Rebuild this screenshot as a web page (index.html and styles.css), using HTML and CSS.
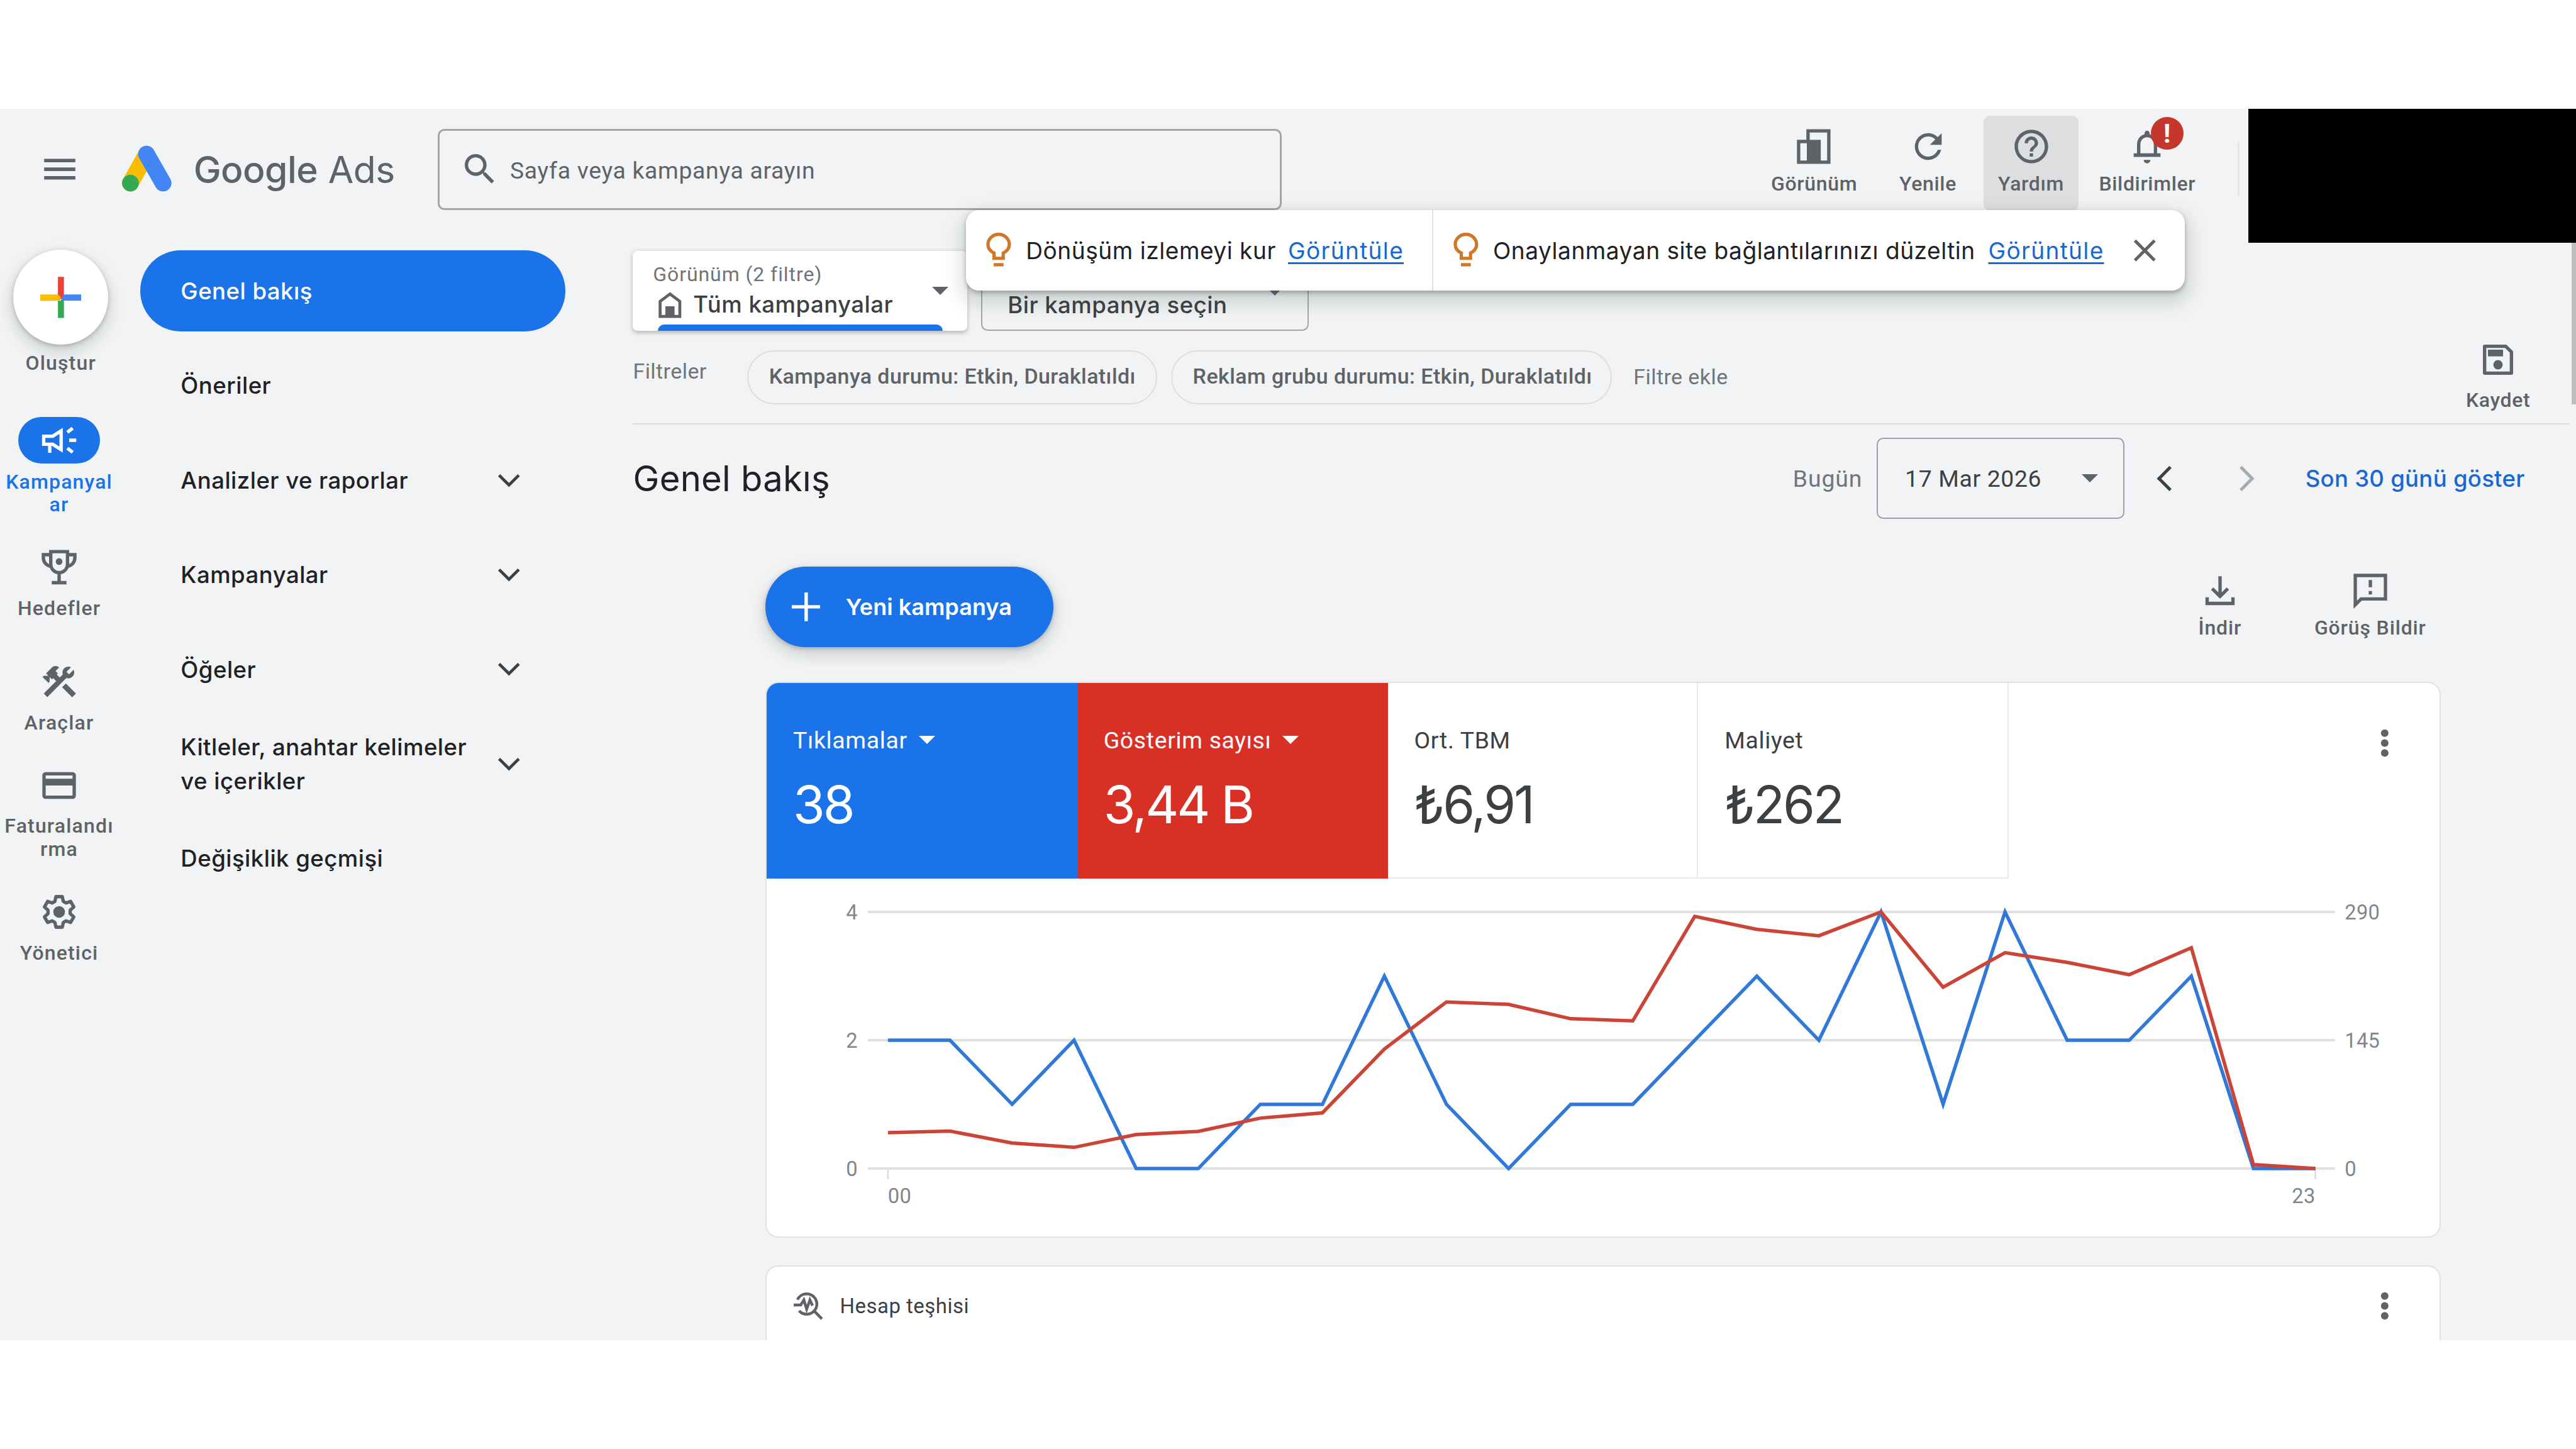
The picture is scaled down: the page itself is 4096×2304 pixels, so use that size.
FILE: index.html
```html
<!DOCTYPE html>
<html lang="tr">
<head>
  <meta charset="UTF-8">
  <title>Genel bakış - Google Ads</title>
  <link rel="stylesheet" href="styles.css">
</head>
<body>
  <div class="app">
    <header class="topbar">
      <svg class="icon menu" viewBox="0 0 24 24"><path d="M2.7 5.8h18.6v2.1H2.7zM2.7 11h18.6v2.1H2.7zM2.7 16.1h18.6v2.1H2.7z"/></svg>
      <svg class="logo" viewBox="0 0 31 29">
        <path d="M15.3 5.4 5.5 23" stroke="#fbbc04"/>
        <path d="M15.3 5.4 25.4 23" stroke="#4285f4"/>
        <circle cx="5.5" cy="23" r="5.1" fill="#34a853"/>
      </svg>
      <div class="brand"><span class="brand-google">Google</span> <span class="brand-ads">Ads</span></div>
      <div class="search">
        <svg class="icon" viewBox="0 0 24 24"><path d="M15.5 14h-.79l-.28-.27C15.41 12.59 16 11.11 16 9.5 16 5.91 13.09 3 9.5 3S3 5.91 3 9.5 5.91 16 9.5 16c1.61 0 3.09-.59 4.23-1.57l.27.28v.79l5 4.99L20.49 19l-4.99-5zm-6 0C7.01 14 5 11.99 5 9.5S7.01 5 9.5 5 14 7.01 14 9.5 11.99 14 9.5 14z"/></svg>
        <span>Sayfa veya kampanya arayın</span>
      </div>
      <div class="tools">
        <div class="tool">
          <svg class="icon" viewBox="0 0 24 24"><path class="line" d="M8.2 2.7h12.4v18.6H2.6V9h5.6z"/><path d="M7.5 8h8.3v14H7.5z"/></svg>
          <span>Görünüm</span>
        </div>
        <div class="tool tool-refresh">
          <svg class="icon" viewBox="0 0 24 24"><path d="M17.65 6.35C16.2 4.9 14.21 4 12 4c-4.42 0-7.99 3.58-7.99 8s3.57 8 7.99 8c3.73 0 6.84-2.55 7.73-6h-2.08c-.82 2.33-3.04 4-5.65 4-3.31 0-6-2.69-6-6s2.69-6 6-6c1.66 0 3.14.69 4.22 1.78L13 11h7V4l-2.35 2.35z"/></svg>
          <span>Yenile</span>
        </div>
        <div class="tool tool-active">
          <svg class="icon" viewBox="0 0 24 24"><path d="M11 18h2v-2h-2v2zm1-16C6.48 2 2 6.48 2 12s4.48 10 10 10 10-4.48 10-10S17.52 2 12 2zm0 18c-4.41 0-8-3.59-8-8s3.59-8 8-8 8 3.59 8 8-3.59 8-8 8zm0-14c-2.21 0-4 1.79-4 4h2c0-1.1.9-2 2-2s2 .9 2 2c0 2-3 1.75-3 5h2c0-2.25 3-2.5 3-5 0-2.21-1.79-4-4-4z"/></svg>
          <span>Yardım</span>
        </div>
        <div class="tool tool-bell">
          <svg class="icon" viewBox="0 0 24 24"><path d="M12 22c1.1 0 2-.9 2-2h-4c0 1.1.9 2 2 2zm6-6v-5c0-3.07-1.63-5.64-4.5-6.32V4c0-.83-.67-1.5-1.5-1.5s-1.5.67-1.5 1.5v.68C7.64 5.36 6 7.92 6 11v5H4v2.2h16V16h-2zm-2 0H8v-5c0-2.48 1.51-4.5 4-4.5s4 2.02 4 4.5v5z"/></svg>
          <span>Bildirimler</span>
          <b class="badge">!</b>
        </div>
      </div>
      <div class="topbar-line"></div>
    </header>

    <div class="body">
      <aside class="rail">
        <div class="fab">
          <svg viewBox="0 0 26 26"><path d="M11.2 0h3.8v13l-3.8 2z" fill="#ea4335"/><path d="M0 11.1h11.2l2 2-2 2H0z" fill="#fbbc04"/><path d="M15 11.1h11V15H13z" fill="#4285f4"/><path d="M11.2 15h3.8v11h-3.8z" fill="#34a853"/></svg>
        </div>
        <span class="rail-label rail-create">Oluştur</span>
        <div class="rail-item rail-active">
          <div class="pill">
            <svg class="icon" viewBox="0 0 24 24"><path class="line" d="M2.8 9.6h5.4l5-3.2v11.200l-5-3.200H2.800zM6.400 14.500v5M16.900 7.300l3.200-2.500M18 12h4.200M16.900 16.700l3.200 2.500"/></svg>
          </div>
          <span class="rail-label">Kampanyal<br>ar</span>
        </div>
        <div class="rail-item">
          <svg class="icon" viewBox="0 0 24 24"><path class="line" d="M7 2.700h10v7.500a5 5 0 0 1-10 0zM7 4.500H2.600v1.800c0 2.800 2 4.900 4.800 5.200M17 4.500h4.400v1.800c0 2.800-2 4.900-4.800 5.200M12 15v6M7.600 21.200h8.800"/><circle cx="12" cy="8.600" r="2"/></svg>
          <span class="rail-label">Hedefler</span>
        </div>
        <div class="rail-item rail-gap">
          <svg class="icon" viewBox="0 0 24 24"><path d="m13.780 15.300 2.250-2.250 6 6-2.250 2.250zM17.500 10c1.930 0 3.500-1.570 3.500-3.500 0-.58-.16-1.120-.41-1.600l-2.700 2.700-1.490-1.490 2.700-2.700c-.48-.25-1.020-.41-1.600-.41C15.570 3 14 4.570 14 6.500c0 .41.08.8.21 1.160l-1.850 1.850-1.780-1.780.71-.71-1.410-1.410L12 3.490c-1.170-1.170-3.070-1.170-4.240 0L4.220 7.030l1.410 1.410H2.810l-.71.71 3.540 3.540.71-.71V9.150l1.410 1.410.71-.71 1.780 1.780-7.410 7.410 2.120 2.120L16.340 9.790c.36.13.75.21 1.160.21z"/></svg>
          <span class="rail-label">Araçlar</span>
        </div>
        <div class="rail-item">
          <svg class="icon" viewBox="0 0 24 24"><path d="M20 4H4c-1.110 0-1.990.89-1.990 2L2 18c0 1.110.89 2 2 2h16c1.110 0 2-.89 2-2V6c0-1.110-.89-2-2-2zm0 14H4v-6h16v6zm0-10H4V6h16v2z"/></svg>
          <span class="rail-label">Faturalandı<br>rma</span>
        </div>
        <div class="rail-item">
          <svg class="icon" viewBox="0 0 24 24"><path class="line" stroke-linejoin="round" d="M10.100 2.900h3.800l.6 2.800 1.600.95 2.750-.9 1.900 3.300-2.150 1.950v2l2.150 1.950-1.900 3.300-2.750-.9-1.600.95-.6 2.800h-3.800l-.6-2.800-1.600-.95-2.750.9-1.900-3.300L5.400 13v-2L3.250 9.050l1.900-3.300 2.750.9 1.600-.95z"/><circle cx="12" cy="12" r="3.500"/></svg>
          <span class="rail-label">Yönetici</span>
        </div>
      </aside>

      <nav class="nav">
        <a class="nav-item nav-active">Genel bakış</a>
        <a class="nav-item">Öneriler</a>
        <a class="nav-item">Analizler ve raporlar <svg class="chev" viewBox="0 0 14 9"><path d="m1 1 6 6 6-6"/></svg></a>
        <a class="nav-item">Kampanyalar <svg class="chev" viewBox="0 0 14 9"><path d="m1 1 6 6 6-6"/></svg></a>
        <a class="nav-item">Öğeler <svg class="chev" viewBox="0 0 14 9"><path d="m1 1 6 6 6-6"/></svg></a>
        <a class="nav-item"><span>Kitleler, anahtar kelimeler<br>ve içerikler</span> <svg class="chev" viewBox="0 0 14 9"><path d="m1 1 6 6 6-6"/></svg></a>
        <a class="nav-item">Değişiklik geçmişi</a>
      </nav>

      <main class="main">
        <div class="selectors">
          <div class="select select-view">
            <div class="select-text">
              <small>Görünüm (2 filtre)</small>
              <div class="select-value">
                <svg class="home" viewBox="0 0 14 16"><path class="line" d="M1 15V5.800L7 1.300l6 4.500V15z"/><path d="M4.200 8.800h5.600V15H4.200z"/></svg>
                <span>Tüm kampanyalar</span>
              </div>
            </div>
            <i class="caret"></i>
          </div>
          <div class="select select-campaign">
            <span>Bir kampanya seçin</span>
            <i class="caret"></i>
          </div>
        </div>

        <div class="filters">
          <span class="filters-label">Filtreler</span>
          <span class="chip chip-status">Kampanya durumu: Etkin, Duraklatıldı</span>
          <span class="chip chip-group">Reklam grubu durumu: Etkin, Duraklatıldı</span>
          <span class="filters-add">Filtre ekle</span>
          <div class="tool save">
            <svg class="icon" viewBox="0 0 24 24"><path class="line" d="M4 4h12.600L20 7.400V20H4z" stroke-linejoin="round"/><path d="M6 6h9v4H6z"/><circle cx="12" cy="15" r="2.800"/></svg>
            <span>Kaydet</span>
          </div>
        </div>

        <div class="title-row">
          <h1>Genel bakış</h1>
          <span class="today">Bugün</span>
          <div class="date"><span>17 Mar 2026</span><i class="caret"></i></div>
          <svg class="arrow" viewBox="0 0 10 16"><path d="M8.500 1 1.500 8l7 7"/></svg>
          <svg class="arrow arrow-off" viewBox="0 0 10 16"><path d="m1.500 1 7 7-7 7"/></svg>
          <a class="last30">Son 30 günü göster</a>
        </div>

        <div class="actions">
          <a class="new-campaign">
            <svg viewBox="0 0 17 17"><path d="M8.500 0v17M0 8.500h17" stroke="#fff" stroke-width="2"/></svg>
            <span>Yeni kampanya</span>
          </a>
          <div class="tool download">
            <svg class="icon" viewBox="0 0 24 24"><path class="line" d="M12 3.500v11.700M7.300 10.800l4.700 4.700 4.700-4.700M4.300 16v3.700h15.400V16"/></svg>
            <span>İndir</span>
          </div>
          <div class="tool feedback">
            <svg class="icon" viewBox="0 0 24 24"><path class="line" d="M3 3h18v14H6.500L3 20.500z"/><path d="M11 5.700h2V10h-2zM11 12.300h2v2h-2z"/></svg>
            <span>Görüş Bildir</span>
          </div>
        </div>

        <section class="card chart-card">
          <div class="metrics">
            <div class="metric metric-blue"><span>Tıklamalar <i class="caret"></i></span><b>38</b></div>
            <div class="metric metric-red"><span>Gösterim sayısı <i class="caret"></i></span><b>3,44 B</b></div>
            <div class="metric"><span>Ort. TBM</span><b>₺6,91</b></div>
            <div class="metric"><span>Maliyet</span><b>₺262</b></div>
            <svg class="kebab" viewBox="0 0 6 18"><circle cx="3" cy="3" r="2.300"/><circle cx="3" cy="9" r="2.300"/><circle cx="3" cy="15" r="2.300"/></svg>
          </div>
          <svg class="chart" viewBox="0 0 1018.800 218.200">
            <path class="grid" d="M62 20.300h893M62 98.400h893M62 176.500h893"/>
            <path class="tick" d="M74.200 177v6M943.100 177v6"/>
            <g class="axis">
              <text x="55.800" y="24.900" text-anchor="end">4</text>
              <text x="55.800" y="103" text-anchor="end">2</text>
              <text x="55.800" y="181" text-anchor="end">0</text>
              <text x="961" y="24.900">290</text>
              <text x="961" y="103">145</text>
              <text x="961" y="181">0</text>
              <text x="74.200" y="197.500">00</text>
              <text x="943.100" y="197.500" text-anchor="end">23</text>
            </g>
          </svg>
        </section>

        <section class="card diag-card">
          <svg class="diag-icon" viewBox="0 0 18 18"><path class="line" d="M2.300 5.200A6.200 6.200 0 1 1 3.300 12M12.700 12.300l4.500 4.600M0 8.400h4.300l1.900-3 1.700 5.600 2-5.600 1.600 3.400"/></svg>
          <span>Hesap teşhisi</span>
          <svg class="kebab" viewBox="0 0 6 18"><circle cx="3" cy="3" r="2.300"/><circle cx="3" cy="9" r="2.300"/><circle cx="3" cy="15" r="2.300"/></svg>
        </section>
      </main>
    </div>

    <!-- bildirim çubuğu -->
    <div class="toast">
      <div class="toast-part">
        <svg class="bulb" viewBox="0 0 16 22"><path d="M5.200 15.600v-3.200C3 11.300 1.500 9.500 1.500 7.200a6.500 6.200 0 0 1 13 0c0 2.300-1.500 4.100-3.700 5.200v3.200z"/><path d="M5 19.500h6"/></svg>
        <span class="toast-a">Dönüşüm izlemeyi kur</span>
        <a>Görüntüle</a>
      </div>
      <div class="toast-part toast-second">
        <svg class="bulb" viewBox="0 0 16 22"><path d="M5.200 15.600v-3.200C3 11.300 1.500 9.500 1.500 7.200a6.500 6.200 0 0 1 13 0c0 2.300-1.500 4.100-3.700 5.200v3.200z"/><path d="M5 19.500h6"/></svg>
        <span class="toast-b">Onaylanmayan site bağlantılarınızı düzeltin</span>
        <a>Görüntüle</a>
        <svg class="close" viewBox="0 0 14 14"><path d="m1 1 12 12M13 1 1 13"/></svg>
      </div>
    </div>

    <div class="account-mask"></div>
    <div class="scroll-thumb"></div>
  </div>

  <script src="chart.js"></script>
</body>
</html>
```
FILE: styles.css
```css
/* 1rem = pencere genişliğinin 156,8'de biri */
html { font-size: calc(100vw / 156.8); }
body { margin: 0; background: #fff; overflow: hidden; font-family: Roboto, "Liberation Sans", sans-serif; color: #5f6368; }
svg { display: block; flex: none; fill: #5f6368; }
h1 { margin: 0; font-weight: 400; }

.app { position: relative; margin-top: 6.63rem; height: 74.94rem; background: #f1f3f4; overflow: hidden; }
.icon { width: 2.45rem; height: 2.45rem; }
.line { fill: none; stroke: #5f6368; stroke-width: 2; }
.caret { display: inline-block; flex: none; border: .51rem solid transparent; border-top-color: #5f6368; border-bottom: 0; }

/* üst çubuk */
.topbar { display: flex; align-items: center; height: 7.36rem; padding-left: 2.4rem; }
.logo { width: 3.1rem; height: 2.9rem; margin-left: 2.53rem; fill: none; stroke-width: 10.2; stroke-linecap: round; }
.logo circle { stroke: none; }
.brand { width: 12.4rem; margin-left: 1.3rem; font-family: Inter, sans-serif; font-size: 2.25rem; white-space: nowrap; }
.brand-google { font-weight: 500; letter-spacing: -.02rem; }
.brand-ads { letter-spacing: -.02rem; }
.search { box-sizing: border-box; display: flex; align-items: center; width: 51.4rem; height: 4.94rem; margin-left: 2.45rem; padding-left: 1.25rem; border: .13rem solid #a3a6a9; border-radius: .4rem; font-size: 1.43rem; }
.search span { margin: .1rem 0 0 .6rem; letter-spacing: .026rem; }
.tools { display: flex; align-self: flex-start; margin-top: .4rem; margin-left: 28.3rem; }
.tool { position: relative; display: flex; flex-direction: column; align-items: center; font-size: 1.225rem; font-weight: 500; line-height: 1.4rem; letter-spacing: .025rem; white-space: nowrap; }
.tools .tool { box-sizing: border-box; width: 8.2rem; height: 5.8rem; padding-top: .66rem; }
.tool span { margin-top: .35rem; }
.tools .tool-refresh { width: 5.65rem; margin-right: .58rem; }
.tools .tool-active { width: 5.75rem; background: #dcdee0; border-radius: .4rem; }
.tools .tool-bell { width: 8.4rem; }
.badge { position: absolute; top: .1rem; left: 4.4rem; width: 2rem; height: 2rem; border-radius: 50%; background: #c5372c; color: #fff; font-size: 1.6rem; line-height: 2.05rem; text-align: center; letter-spacing: 0; }
.topbar-line { width: .1rem; height: 3.3rem; margin-left: 1.3rem; background: #e4e6e8; }

.body { display: flex; }

/* sol şerit */
.rail { display: flex; flex-direction: column; align-items: center; width: 7.2rem; padding-top: 1.2rem; }
.fab { display: flex; align-items: center; justify-content: center; width: 5.8rem; height: 5.8rem; margin-left: .2rem; border-radius: 50%; background: #fff; box-shadow: 0 .1rem .3rem rgba(60,64,67,.3), 0 .4rem .8rem .2rem rgba(60,64,67,.15); }
.fab svg { width: 2.5rem; height: 2.6rem; }
.rail-label { font-size: 1.225rem; font-weight: 500; line-height: 1.4rem; letter-spacing: .045rem; text-align: center; }
.rail-create { margin: .4rem 0 0 .2rem; }
.rail-item { display: flex; flex-direction: column; align-items: center; gap: .56rem; margin-top: 1.9rem; }
.rail-active { margin-top: 2.58rem; gap: .4rem; color: #1a73e8; }
.rail-active .line { stroke: #fff; }
.rail-gap { margin-top: 2.54rem; }
.pill { display: flex; align-items: center; justify-content: center; width: 4.98rem; height: 2.85rem; border-radius: 1.43rem; background: #1a73e8; }

/* gezinme menüsü */
.nav { display: flex; flex-direction: column; gap: .84rem; width: 25.9rem; margin-left: 1.33rem; padding-top: 1.26rem; }
.nav-item { box-sizing: border-box; display: flex; align-items: center; justify-content: space-between; height: 4.92rem; padding: .06rem 2.75rem 0 2.47rem; border-radius: 2.46rem; color: #202124; font-family: Inter, sans-serif; font-size: 1.4rem; font-weight: 500; line-height: 2.04rem; letter-spacing: .018rem; white-space: nowrap; }
.nav-active { background: #1a73e8; color: #fff; }
.chev { width: 1.4rem; height: .9rem; fill: none; stroke: #3c4043; stroke-width: 1.8; }

.main { flex: 1; margin-left: 4.1rem; padding-top: 1.28rem; }

/* görünüm seçimi */
.selectors { display: flex; gap: .85rem; height: 4.88rem; }
.select { box-sizing: border-box; display: flex; align-items: center; justify-content: space-between; }
.select-view { position: relative; width: 20.33rem; padding: 0 1.15rem 0 1.22rem; border-radius: .3rem; background: #fff; box-shadow: 0 .1rem .3rem rgba(60,64,67,.35); }
.select-view::after { content: ""; position: absolute; left: 1.5rem; bottom: 0; width: 17.36rem; height: .4rem; border-radius: .4rem .4rem 0 0; background: #1a73e8; }
.select-text small { display: block; font-size: 1.225rem; line-height: 1.6rem; letter-spacing: .035rem; color: #70757a; }
.select-value { display: flex; align-items: center; gap: .7rem; margin-bottom: -.1rem; padding-left: .35rem; font-family: Inter, sans-serif; font-size: 1.4rem; font-weight: 500; line-height: 2.1rem; letter-spacing: .018rem; color: #3c4043; }
.home { width: 1.4rem; height: 1.6rem; }
.home .line { stroke-width: 1.8; }
.select-campaign { width: 19.95rem; padding: 1.7rem 1.5rem 0 1.55rem; border: .1rem solid #a3a6a9; border-radius: .4rem; color: #3c4043; font-family: Inter, sans-serif; font-size: 1.4rem; font-weight: 500; letter-spacing: .018rem; }
.select-campaign .caret { margin-top: -1.6rem; }

/* filtreler */
.filters { box-sizing: border-box; display: flex; align-items: center; width: 117.9rem; height: 5.71rem; border-bottom: .1rem solid #dadce0; font-size: 1.3rem; letter-spacing: .017rem; white-space: nowrap; }
.filters-label { width: 6.95rem; padding-bottom: .7rem; color: #70757a; }
.chip { box-sizing: border-box; height: 3.32rem; margin-right: .85rem; padding: 0 1.25rem; border: .1rem solid #dcdee1; border-radius: 1.66rem; font-weight: 500; line-height: 3.1rem; }
.chip-status { width: 24.95rem; }
.chip-group { width: 26.85rem; }
.filters-add { margin-left: .45rem; color: #70757a; }
.save { width: 6rem; margin-left: auto; margin-right: 1.37rem; padding-bottom: .2rem; }
.save span { margin-top: .5rem; }

/* başlık */
.title-row { display: flex; align-items: center; height: 4.95rem; margin-top: .79rem; white-space: nowrap; }
.title-row h1 { width: 70.6rem; font-family: Inter, sans-serif; font-size: 2.15rem; letter-spacing: .01rem; color: #202124; }
.today { width: 5.1rem; font-size: 1.43rem; letter-spacing: .035rem; color: #70757a; }
.date { box-sizing: border-box; display: flex; align-items: center; justify-content: space-between; width: 15.1rem; height: 4.95rem; padding: 0 1.55rem 0 1.65rem; border: .1rem solid #9aa0a6; border-radius: .4rem; font-size: 1.43rem; letter-spacing: .025rem; color: #3c4043; }
.arrow { width: 1rem; height: 1.6rem; margin-left: 1.95rem; fill: none; stroke: #3c4043; stroke-width: 1.9; }
.arrow-off { margin-left: 3.95rem; stroke: #a8abae; }
.last30 { margin-left: 3.1rem; color: #1967d2; font-family: Inter, sans-serif; font-size: 1.4rem; font-weight: 500; letter-spacing: .01rem; }

.actions { display: flex; align-items: flex-start; height: 4.93rem; margin: 2.88rem 0 0 8.05rem; }
.new-campaign { box-sizing: border-box; display: flex; align-items: center; width: 17.55rem; height: 4.93rem; padding-left: 1.6rem; border-radius: 2.47rem; background: #1a73e8; color: #fff; font-family: Inter, sans-serif; font-size: 1.38rem; font-weight: 600; white-space: nowrap; box-shadow: 0 .1rem .3rem rgba(60,64,67,.3), 0 .4rem .8rem .2rem rgba(60,64,67,.15); }
.new-campaign svg { width: 1.75rem; height: 1.75rem; margin-right: 1.55rem; }
.download { width: 6rem; margin-left: 68rem; padding-top: .25rem; }
.feedback { width: 8rem; margin-left: 2.15rem; padding-top: .25rem; }
.actions .tool { letter-spacing: .033rem; }

/* kartlar */
.card { box-sizing: border-box; width: 101.98rem; margin-left: 8.07rem; border: .1rem solid #e0e2e5; border-radius: .8rem; background: #fff; overflow: hidden; }
.chart-card { height: 33.85rem; margin-top: 2.1rem; }
.metrics { display: flex; height: 11.9rem; }
.metric { box-sizing: border-box; width: 18.9rem; padding: 2.46rem 0 0 1.6rem; border-right: .1rem solid #e8eaed; border-bottom: .1rem solid #e8eaed; color: #3c4043; }
.metric span { display: block; font-size: 1.43rem; line-height: 2rem; letter-spacing: .026rem; white-space: nowrap; }
.metric b { display: block; margin-top: .94rem; font-family: Inter, sans-serif; font-size: 3.15rem; font-weight: 400; line-height: 4rem; letter-spacing: -.12rem; }
.metric .caret { margin: 0 0 .25rem .3rem; border-top-color: #fff; }
.metric-blue { background: #1a73e8; border-color: #1a73e8; color: #fff; }
.metric-red { background: #d93025; border-color: #d93025; color: #fff; }
.kebab { width: .6rem; height: 1.8rem; }
.metrics .kebab { margin: 2.75rem 3.03rem 0 auto; }

/* grafik */
.chart { width: 101.88rem; height: 21.82rem; margin-left: -.04rem; }
.grid { fill: none; stroke: #e0e0e0; stroke-width: 1.5; }
.tick { fill: none; stroke: #dadce0; stroke-width: 1; }
.axis { fill: #80868b; font-size: 12.5px; letter-spacing: .1px; }
.series { fill: none; stroke-width: 2.1; }
.series-clicks { stroke: #3079d8; }
.series-views { stroke: #cb4437; }

.diag-card { display: flex; align-items: center; height: 8rem; margin-top: 1.65rem; padding: 0 3.03rem 3rem 1.65rem; color: #3c4043; font-size: 1.26rem; letter-spacing: .02rem; }
.diag-icon { width: 1.8rem; height: 1.8rem; margin-right: 1rem; }
.diag-icon .line { stroke-width: 1.7; }
.diag-card .kebab { margin-left: auto; }

/* bildirim çubuğu */
.toast { position: absolute; left: 58.8rem; top: 6.17rem; display: flex; width: 74.2rem; height: 4.9rem; border-radius: .8rem; background: #fff; box-shadow: 0 .15rem .3rem rgba(60,64,67,.35), 0 .5rem 1.1rem .3rem rgba(60,64,67,.18); font-family: Inter, sans-serif; font-size: 1.42rem; letter-spacing: .02rem; color: #202124; white-space: nowrap; }
.toast-part { box-sizing: border-box; display: flex; align-items: center; width: 28.35rem; padding-left: 1.2rem; }
.toast-second { width: 45.85rem; border-left: .1rem solid #e0e2e5; }
.toast a { color: #1967d2; letter-spacing: .05rem; text-decoration: underline; text-underline-offset: .2rem; text-decoration-thickness: .1rem; }
.toast-a { width: 15.95rem; }
.toast-b { width: 30.15rem; }
.bulb { width: 1.6rem; height: 2.2rem; margin-right: .85rem; fill: none; stroke: #d0782a; stroke-width: 2; }
.close { width: 1.4rem; height: 1.4rem; margin: 0 1.75rem 0 auto; fill: none; stroke: #5f6368; stroke-width: 1.9; }

.account-mask { position: absolute; top: 0; right: 0; width: 19.93rem; height: 8.14rem; background: #000; }
.scroll-thumb { position: absolute; top: 8.14rem; right: 0; width: .26rem; height: 9.83rem; background: #bcbec0; }
```
FILE: chart.js
```js
// Saatlik veriler: tıklamalar (0-4) ve gösterimler (0-290)
const clicks = [2, 2, 1, 2, 0, 0, 1, 1, 3, 1, 0, 1, 1, 2, 3, 2, 4, 1, 4, 2, 2, 3, 0, 0];
const views = [40.5, 42.4, 28.8, 24, 38.5, 42, 57, 63, 135, 188.2, 185.4, 169.3, 167, 285, 270.3, 263, 290, 205, 244, 233, 219, 249.5, 4.5, 0];

function drawSeries(values, max, name) {
  const svg = document.querySelector('.chart');
  const line = document.createElementNS('http://www.w3.org/2000/svg', 'polyline');
  const points = values.map((v, i) => {
    const x = 74.2 + i * 37.78;
    const y = 176.5 - (v / max) * 156.2;
    return x.toFixed(1) + ',' + y.toFixed(1);
  });
  line.setAttribute('class', 'series ' + name);
  line.setAttribute('points', points.join(' '));
  svg.appendChild(line);
}

drawSeries(clicks, 4, 'series-clicks');
drawSeries(views, 290, 'series-views');
```
